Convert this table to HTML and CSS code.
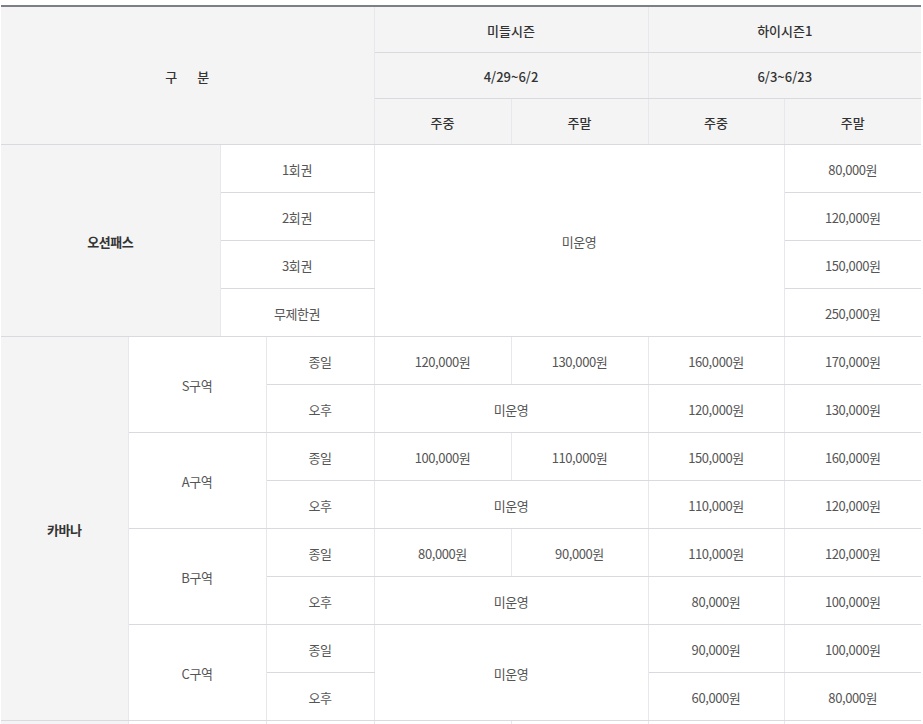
FILE: index.html
```html
<!DOCTYPE html>
<html lang="ko">
<head>
<meta charset="utf-8">
<title>요금표</title>
<link rel="stylesheet" href="styles.css">
</head>
<body>
<div class="wrap">
<table class="price">
  <colgroup>
    <col class="c1"><col class="c2"><col class="c3"><col class="c4">
    <col class="c5"><col class="c6"><col class="c7"><col class="c8">
  </colgroup>
  <thead>
    <tr class="hrow">
      <th rowspan="3" colspan="4">구<span class="gap"></span>분</th>
      <th colspan="2">미들시즌</th>
      <th colspan="2">하이시즌1</th>
    </tr>
    <tr class="hrow">
      <th colspan="2">4/29~6/2</th>
      <th colspan="2">6/3~6/23</th>
    </tr>
    <tr class="hrow">
      <th>주중</th><th>주말</th><th>주중</th><th>주말</th>
    </tr>
  </thead>
  <tbody>
    <tr>
      <td class="grp" rowspan="4" colspan="2">오션패스</td>
      <td colspan="2">1회권</td>
      <td colspan="3" rowspan="4">미운영</td>
      <td>80,000원</td>
    </tr>
    <tr><td colspan="2">2회권</td><td>120,000원</td></tr>
    <tr><td colspan="2">3회권</td><td>150,000원</td></tr>
    <tr><td colspan="2">무제한권</td><td>250,000원</td></tr>

    <tr>
      <td class="grp" rowspan="8">카바나</td>
      <td colspan="2" rowspan="2">S구역</td>
      <td>종일</td><td>120,000원</td><td>130,000원</td><td>160,000원</td><td>170,000원</td>
    </tr>
    <tr><td>오후</td><td colspan="2">미운영</td><td>120,000원</td><td>130,000원</td></tr>
    <tr>
      <td colspan="2" rowspan="2">A구역</td>
      <td>종일</td><td>100,000원</td><td>110,000원</td><td>150,000원</td><td>160,000원</td>
    </tr>
    <tr><td>오후</td><td colspan="2">미운영</td><td>110,000원</td><td>120,000원</td></tr>
    <tr>
      <td colspan="2" rowspan="2">B구역</td>
      <td>종일</td><td>80,000원</td><td>90,000원</td><td>110,000원</td><td>120,000원</td>
    </tr>
    <tr><td>오후</td><td colspan="2">미운영</td><td>80,000원</td><td>100,000원</td></tr>
    <tr>
      <td colspan="2" rowspan="2">C구역</td>
      <td>종일</td><td colspan="2" rowspan="2">미운영</td><td>90,000원</td><td>100,000원</td>
    </tr>
    <tr><td>오후</td><td>60,000원</td><td>80,000원</td></tr>

    <tr>
      <td class="grp"></td>
      <td colspan="2"></td>
      <td></td><td></td><td></td><td></td><td></td>
    </tr>
  </tbody>
</table>
</div>
</body>
</html>
```

FILE: styles.css
```css
html, body {
  margin: 0;
  padding: 0;
  background: #ffffff;
}

.wrap {
  padding: 5px 2px 0 1px;
}

.price {
  width: 920px;
  border-collapse: collapse;
  table-layout: fixed;
  border-top: 2px solid #7b7f8a;
  font-family: "Noto Sans CJK KR", "Noto Sans", sans-serif;
  font-size: 13px;
  color: #555555;
}

.c1 { width: 127px; }
.c2 { width: 92px; }
.c3 { width: 46px; }
.c4 { width: 108px; }
.c5 { width: 137px; }
.c6 { width: 137px; }
.c7 { width: 136px; }
.c8 { width: 137px; }

.price th,
.price td {
  padding: 3px 0 0 0;
  text-align: center;
  vertical-align: middle;
  border-bottom: 1px solid #d9dae0;
  border-right: 1px solid #e8e8ec;
  line-height: 18px;
}

.price td {
  letter-spacing: -0.4px;
}

.price tr > :last-child {
  border-right: 0;
}

.price th {
  background: #f4f4f4;
  color: #333333;
  font-weight: 500;
}

.hrow {
  height: 46px;
}

.price tbody tr {
  height: 48px;
}

.price td.grp {
  background: #f4f4f4;
  color: #333333;
  font-weight: 700;
}

.gap {
  display: inline-block;
  width: 20px;
}
```
